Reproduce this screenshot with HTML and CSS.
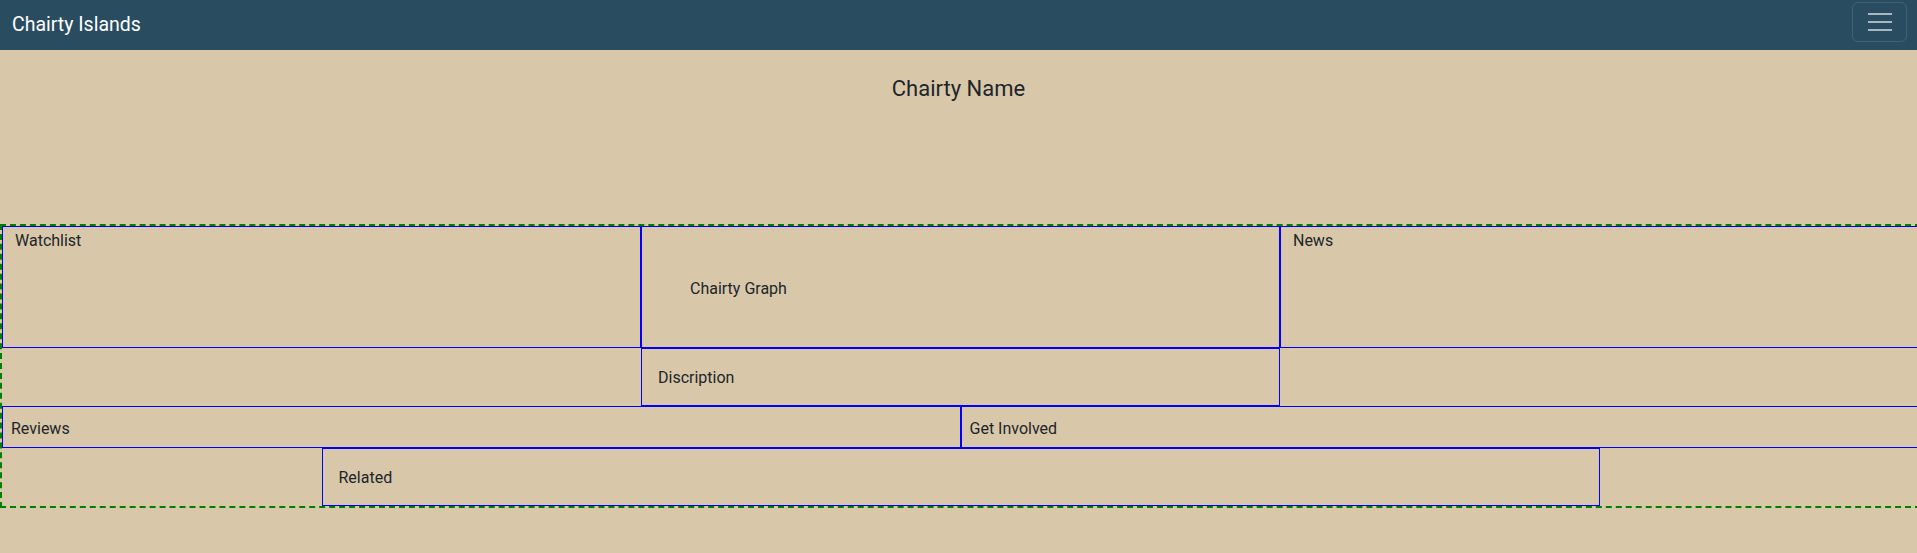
FILE: index.html
```html
<!DOCTYPE html>
<html lang="en">
<head>
<meta charset="utf-8">
<title>Chairty Islands</title>
<link rel="stylesheet" href="styles.css">
</head>
<body>
<nav class="navbar">
  <a class="brand" href="#">Chairty Islands</a>
  <button class="toggler" type="button" aria-label="Toggle navigation">
    <svg class="toggler-icon" width="24" height="18" viewBox="0 0 24 18" aria-hidden="true">
      <path d="M0 1H24M0 9H24M0 17H24" stroke="currentColor" stroke-width="2" fill="none"/>
    </svg>
  </button>
</nav>
<header class="title-area">
  <h1 class="title">Chairty Name</h1>
</header>
<main class="board">
  <div class="row">
    <section class="col-4 cell pad-x">Watchlist</section>
    <section class="col-4 cell pad-5">Chairty Graph</section>
    <section class="col-4 cell pad-x">News</section>
  </div>
  <div class="row">
    <div class="col-4"></div>
    <section class="col-4 cell pad-3">Discription</section>
    <div class="col-4"></div>
  </div>
  <div class="row">
    <section class="col-6 cell pad-2">Reviews</section>
    <section class="col-6 cell pad-2">Get Involved</section>
  </div>
  <div class="row">
    <section class="col-8 offset-2 cell pad-3">Related</section>
  </div>
</main>
</body>
</html>
```
FILE: styles.css
```css
html, body {
  margin: 0;
  padding: 0;
  overflow-x: hidden;
}
body {
  background: #d8c8a9;
  color: #212529;
  font-family: Roboto, "Open Sans", sans-serif;
  font-size: 16px;
  line-height: 1.5;
}
.navbar {
  display: flex;
  justify-content: space-between;
  align-items: flex-start;
  height: 50px;
  box-sizing: border-box;
  padding: 0 10px 0 12px;
  background: #294c61;
}
.brand {
  color: #fff;
  text-decoration: none;
  font-size: 19.5px;
  line-height: 30px;
  padding-top: 10px;
}
.toggler {
  margin-top: 2px;
  width: 55px;
  height: 40px;
  box-sizing: border-box;
  padding: 0;
  background: transparent;
  border: 1px solid rgba(255, 255, 255, 0.12);
  border-radius: 6px;
  color: rgba(255, 255, 255, 0.6);
  display: flex;
  align-items: center;
  justify-content: center;
}
.toggler-icon {
  display: block;
}
.title-area {
  height: 174px;
  box-sizing: border-box;
  padding-top: 26px;
  text-align: center;
}
.title {
  margin: 0;
  font-size: 22px;
  font-weight: 400;
  line-height: 1.2;
}
.board {
  width: 1917px;
  border: 2px dashed green;
}
.row {
  display: flex;
  width: 100%;
}
.col-4 { flex: 0 0 33.33333%; }
.col-6 { flex: 0 0 50%; }
.col-8 { flex: 0 0 66.66667%; }
.offset-2 { margin-left: 16.66667%; }
.col-4, .col-6, .col-8 { box-sizing: border-box; }
.cell {
  border: 1px solid #0000ff;
}
.pad-x { padding: 2px 12px 0; }
.pad-2 { padding: 10px 8px 6px; }
.pad-3 { padding: 17px 16px 15px; }
.pad-5 { padding: 50px 48px 46px; }
```
